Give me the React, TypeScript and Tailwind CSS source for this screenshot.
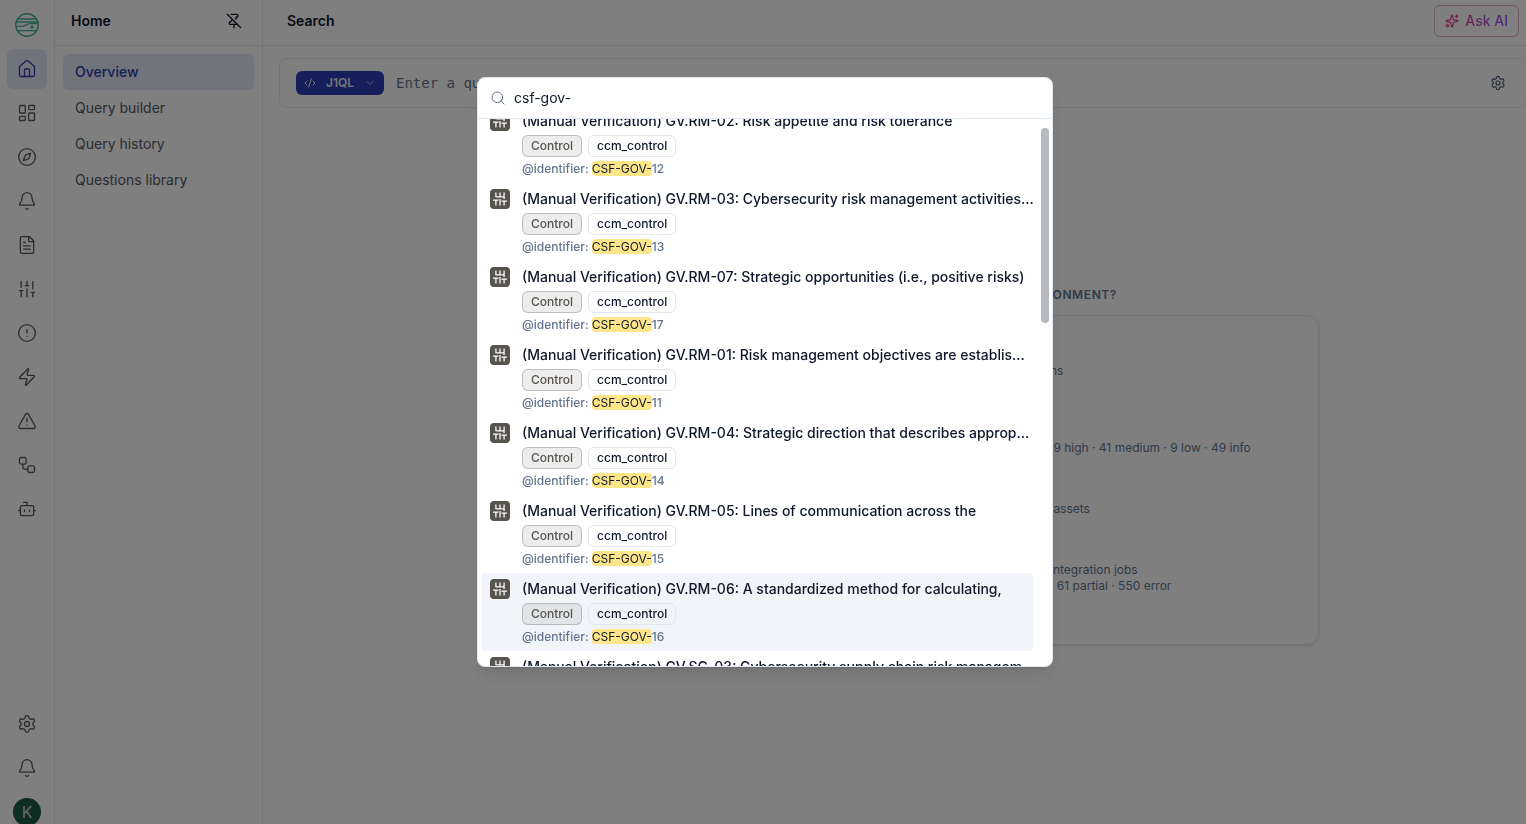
import React from 'react'
import {
  Bell,
  Bot,
  ChevronDown,
  CircleAlert,
  CodeXml,
  Compass,
  FileText,
  House,
  LayoutDashboard,
  PinOff,
  Search,
  Settings,
  SlidersVertical,
  Sparkles,
  TriangleAlert,
  Workflow,
  Zap,
  type LucideIcon
} from 'lucide-react'

interface RailItem {
  label: string
  icon: LucideIcon
  active?: boolean
}

interface Result {
  title: string
  number: string
  selected?: boolean
}

const railItems: RailItem[] = [
  { label: 'Home', icon: House, active: true },
  { label: 'Dashboards', icon: LayoutDashboard },
  { label: 'Explore', icon: Compass },
  { label: 'Alerts', icon: Bell },
  { label: 'Policies', icon: FileText },
  { label: 'Controls', icon: SlidersVertical },
  { label: 'Issues', icon: CircleAlert },
  { label: 'Actions', icon: Zap },
  { label: 'Risks', icon: TriangleAlert },
  { label: 'Workflows', icon: Workflow },
  { label: 'Assistant', icon: Bot }
]

const railFooter: RailItem[] = [
  { label: 'Settings', icon: Settings },
  { label: 'Notifications', icon: Bell }
]

const navItems = ['Overview', 'Query builder', 'Query history', 'Questions library']

const results: Result[] = [
  { title: 'GV.RM-02: Risk appetite and risk tolerance', number: '12' },
  { title: 'GV.RM-03: Cybersecurity risk management activities...', number: '13' },
  { title: 'GV.RM-07: Strategic opportunities (i.e., positive risks)', number: '17' },
  { title: 'GV.RM-01: Risk management objectives are establis...', number: '11' },
  { title: 'GV.RM-04: Strategic direction that describes approp...', number: '14' },
  { title: 'GV.RM-05: Lines of communication across the', number: '15' },
  { title: 'GV.RM-06: A standardized method for calculating,', number: '16', selected: true },
  { title: 'GV.SC-03: Cybersecurity supply chain risk managem...', number: '20' }
]

const Logo = () => (
  <svg viewBox="0 0 24 24" className="size-6 shrink-0 text-[#3fb498]" fill="none" stroke="currentColor" strokeWidth="1.4">
    <circle cx="12" cy="12" r="11.2" />
    <path d="M3.5 6h17M1.5 9h21M1 13.4h5.500c3.500 0 5-2.800 8.800-2.800H23M2.400 17.600h19.200" />
    <circle cx="17" cy="14.200" r="1.600" fill="currentColor" stroke="none" />
  </svg>
)

const ControlIcon = () => (
  <span className="flex size-5 shrink-0 items-center justify-center rounded-sm bg-stone-600 text-white">
    <svg viewBox="0 0 24 24" className="size-3.5" fill="none" stroke="currentColor" strokeWidth="2.2">
      <path d="M5 1v8M5 14v9M12 1v7M12 12v11M19 1v11M19 16v7M0 14h9.500M6 8.500h12M14.500 15.500H24" />
    </svg>
  </span>
)

const RailButton: React.FC<RailItem> = ({ label, icon: Icon, active }) => (
  <button
    aria-label={label}
    className={`flex size-10 shrink-0 items-center justify-center rounded-md ${active ? 'bg-[#e4e8f7] text-[#2b3bac]' : 'text-[#555862]'}`}
  >
    <Icon className="size-5" strokeWidth={1.6} />
  </button>
)

const Rail = () => (
  <nav className="flex h-screen w-[55px] shrink-0 flex-col items-center gap-1 overflow-hidden border-r border-slate-200 pt-[13px]">
    <Logo />
    <div className="mt-2 flex flex-col gap-1">
      {railItems.map((item) => (
        <RailButton key={item.label} {...item} />
      ))}
    </div>
    <div className="-mb-0.5 mt-auto flex flex-col items-center gap-1">
      {railFooter.map((item) => (
        <RailButton key={item.label} {...item} />
      ))}
      <button className="mt-1.5 flex size-7 shrink-0 items-center justify-center rounded-full bg-[#1c5c48] text-base text-slate-300">K</button>
    </div>
  </nav>
)

const Sidebar = () => (
  <aside className="w-52 shrink-0 border-r border-slate-200">
    <div className="flex h-[46px] items-center justify-between border-b border-slate-200 pb-1 pl-4 pr-5">
      <h2 className="text-sm font-semibold text-slate-900">Home</h2>
      <button aria-label="Unpin sidebar" className="text-slate-900">
        <PinOff className="size-4" />
      </button>
    </div>
    <ul className="p-2">
      {navItems.map((item, i) => (
        <li key={item}>
          <a
            href="#"
            className={`flex h-9 items-center rounded-md px-3 text-sm ${i === 0 ? 'bg-[#e4e8f7] font-medium text-[#2b3bac]' : 'text-[#555862]'}`}
          >
            {item}
          </a>
        </li>
      ))}
    </ul>
  </aside>
)

const SummaryCard = () => (
  <section className="ml-auto mr-[207px] mt-[179px] w-[560px]">
    <h3 className="mr-[202px] text-right text-xs font-semibold uppercase leading-4 tracking-wider text-slate-500">Environment?</h3>
    <div className="mt-3 rounded-xl border border-slate-200 pb-[50px] pl-[290px] pt-[47px] text-xs leading-4 text-slate-500 shadow-sm">
      <div className="flex flex-col gap-[45px]">
        <p className="h-8">ns</p>
        <p>&nbsp;9 high · 41 medium · 9 low · 49 info</p>
        <p>&nbsp;assets</p>
        <p>
          integration jobs
          <br />· 61 partial · 550 error
        </p>
      </div>
    </div>
  </section>
)

const Main = () => (
  <main className="min-w-0 flex-1 overflow-hidden">
    <header className="flex h-[46px] items-center justify-between border-b border-slate-200 pb-1 pl-6 pr-[7px]">
      <h1 className="text-sm font-semibold text-slate-900">Search</h1>
      <button className="flex h-8 items-center gap-1.5 rounded-md border border-[#e2aac4] px-2.5 text-sm font-medium">
        <Sparkles className="size-3.5 text-[#e0408c]" />
        <span className="bg-gradient-to-r from-[#dc4090] to-violet-500 bg-clip-text text-transparent">Ask AI</span>
      </button>
    </header>
    <div className="-mr-px ml-4 mt-3 flex h-[50px] items-center gap-3 rounded-lg border border-slate-200 pl-4 pr-5">
      <button className="flex h-6 w-[88px] shrink-0 items-center justify-between rounded-md bg-[#2c3fb8] px-2 text-xs font-semibold text-slate-200">
        <CodeXml className="size-3" />
        J1QL
        <ChevronDown className="size-3" strokeWidth={1.5} />
      </button>
      <input
        aria-label="Query"
        placeholder="Enter a query"
        className="min-w-0 flex-1 font-['DejaVu_Sans_Mono',monospace] text-sm placeholder:text-slate-500"
      />
      <button aria-label="Query settings" className="text-slate-600">
        <Settings className="size-4" strokeWidth={1.75} />
      </button>
    </div>
    <SummaryCard />
  </main>
)

const ResultRow: React.FC<{ result: Result }> = ({ result }) => (
  <li>
    <button className={`flex w-full gap-3 rounded-sm px-2 py-1.5 text-left ${result.selected ? 'bg-slate-100' : ''}`}>
      <ControlIcon />
      <span className="flex min-w-0 flex-1 flex-col gap-1">
        <span className="whitespace-nowrap text-sm font-medium text-slate-900">(Manual Verification) {result.title}</span>
        <span className="flex gap-1.5 text-xs font-medium leading-4">
          <span className="rounded-md border border-stone-600/30 bg-stone-600/10 px-2 py-0.5 text-stone-600">Control</span>
          <span className="rounded-md border border-slate-200 px-2 py-0.5 text-slate-900">ccm_control</span>
        </span>
        <span className="text-xs font-medium leading-4 text-slate-500">
          @identifier: <mark className="rounded-sm bg-[#fde68a] font-normal text-slate-900">CSF-GOV-</mark>
          {result.number}
        </span>
      </span>
    </button>
  </li>
)

const SearchDialog = () => (
  <div className="fixed inset-0 flex items-start justify-center bg-black/50 pl-1 pt-[77px]">
    <div role="dialog" aria-label="Search" className="w-full max-w-xl overflow-hidden rounded-lg border border-slate-200 bg-white shadow-lg">
      <label className="flex h-[41px] items-center gap-2 border-b border-slate-200 px-3">
        <Search className="size-4 shrink-0 text-slate-500" strokeWidth={1.5} />
        <input aria-label="Search term" defaultValue="csf-gov-" className="min-w-0 flex-1 text-sm text-slate-900 outline-none" />
      </label>
      <div className="relative h-[547px] overflow-hidden">
        <ul className="-mt-3.5 pl-1 pr-[19px]">
          {results.map((result) => (
            <ResultRow key={result.number} result={result} />
          ))}
        </ul>
        <div className="absolute right-[3px] top-[9px] h-[195px] w-2 rounded-full bg-[#b8b8c0]" />
      </div>
    </div>
  </div>
)

export default function App() {
  return (
    <div className="flex h-screen overflow-hidden bg-white font-[Inter,sans-serif]">
      <Rail />
      <Sidebar />
      <Main />
      <SearchDialog />
    </div>
  )
}
